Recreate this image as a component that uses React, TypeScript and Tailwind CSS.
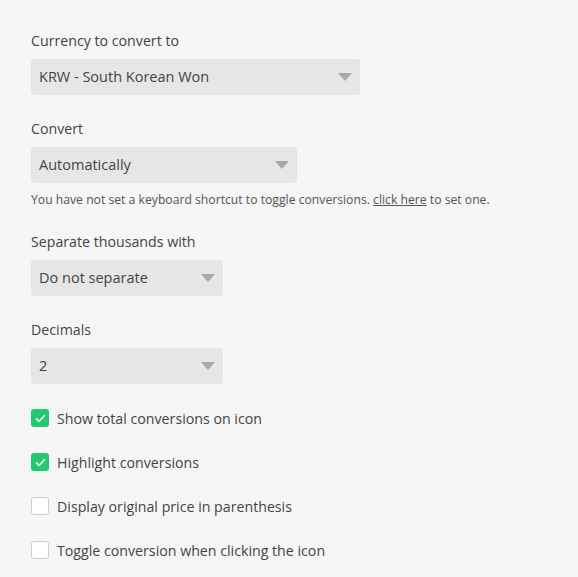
const font = { fontFamily: '"Open Sans", "Noto Sans", sans-serif' };

function Select({ value, width }: { value: string; width: string }) {
  return (
    <div className={`${width} h-9 rounded-[3px] bg-[#e6e6e6] flex items-center justify-between pl-2 pr-2`}>
      <span className="text-[14.5px] text-[#444]">{value}</span>
      <span className="w-0 h-0 border-l-[7px] border-r-[7px] border-t-[8px] border-l-transparent border-r-transparent border-t-[#a9a9a9]" />
    </div>
  );
}

function Field({ label, value, width }: { label: string; value: string; width: string }) {
  return (
    <div className="flex flex-col gap-2">
      <label className="text-[14.2px] text-[#444] leading-5">{label}</label>
      <Select value={value} width={width} />
    </div>
  );
}

function Check({ label, checked }: { label: string; checked?: boolean }) {
  return (
    <div className="flex items-center gap-2 h-[18px]">
      <span
        className={`w-[18px] h-[18px] rounded-[3px] flex items-center justify-center ${
          checked ? "bg-[#21c970]" : "bg-white border border-[#cfcfcf]"
        }`}
      >
        {checked && (
          <svg width="11" height="9" viewBox="0 0 11 9" fill="none" stroke="white" strokeWidth="1.6" strokeLinecap="round" strokeLinejoin="round">
            <path d="M1.5 4.8 4.2 7.3 9.5 1.6" />
          </svg>
        )}
      </span>
      <span className="text-[14.2px] text-[#444]">{label}</span>
    </div>
  );
}

export default function App() {
  return (
    <div className="min-h-screen bg-[#f6f6f6] px-[31px] pt-[31px]" style={font}>
      <Field label="Currency to convert to" value="KRW - South Korean Won" width="w-[329px]" />

      <div className="mt-[24px]">
        <Field label="Convert" value="Automatically" width="w-[266px]" />
        <p className="mt-[8px] text-[12.2px] text-[#555]">
          You have not set a keyboard shortcut to toggle conversions.{" "}
          <a className="underline cursor-pointer">click here</a> to set one.
        </p>
      </div>

      <div className="mt-[23px]">
        <Field label="Separate thousands with" value="Do not separate" width="w-[192px]" />
      </div>

      <div className="mt-[24px]">
        <Field label="Decimals" value="2" width="w-[192px]" />
      </div>

      <div className="mt-[25px] flex flex-col gap-[26px]">
        <Check label="Show total conversions on icon" checked />
        <Check label="Highlight conversions" checked />
        <Check label="Display original price in parenthesis" />
        <Check label="Toggle conversion when clicking the icon" />
      </div>
    </div>
  );
}
